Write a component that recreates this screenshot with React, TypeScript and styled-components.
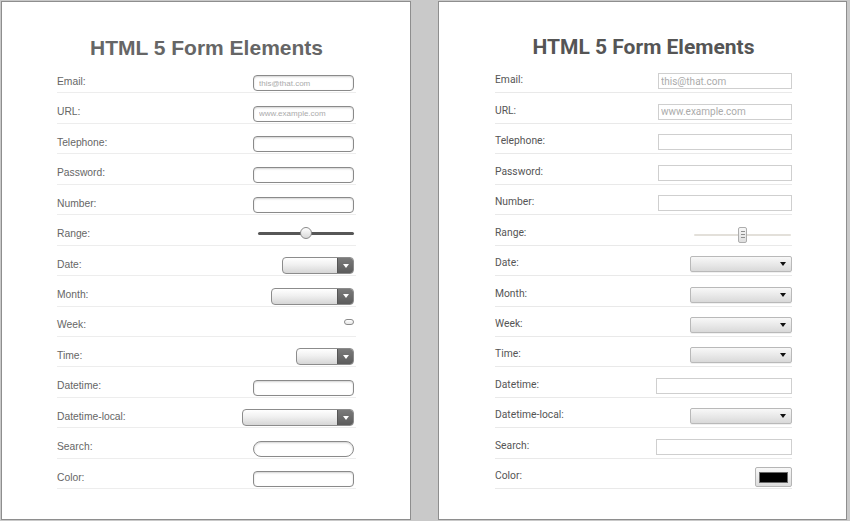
import React from 'react';
import styled, { createGlobalStyle, css } from 'styled-components';

type Skin = 'ios' | 'android';

type Kind = 'text' | 'range' | 'select' | 'week' | 'search' | 'color';

interface FieldDef {
  label: string;
  kind: Kind;
  width?: number;
  placeholder?: string;
}

const iosFields: FieldDef[] = [
  { label: 'Email:', kind: 'text', width: 101, placeholder: 'this@that.com' },
  { label: 'URL:', kind: 'text', width: 101, placeholder: 'www.example.com' },
  { label: 'Telephone:', kind: 'text', width: 101 },
  { label: 'Password:', kind: 'text', width: 101 },
  { label: 'Number:', kind: 'text', width: 101 },
  { label: 'Range:', kind: 'range' },
  { label: 'Date:', kind: 'select', width: 72 },
  { label: 'Month:', kind: 'select', width: 83 },
  { label: 'Week:', kind: 'week' },
  { label: 'Time:', kind: 'select', width: 58 },
  { label: 'Datetime:', kind: 'text', width: 101 },
  { label: 'Datetime-local:', kind: 'select', width: 112 },
  { label: 'Search:', kind: 'search', width: 101 },
  { label: 'Color:', kind: 'text', width: 101 },
];

const androidFields: FieldDef[] = [
  { label: 'Email:', kind: 'text', width: 134, placeholder: 'this@that.com' },
  { label: 'URL:', kind: 'text', width: 134, placeholder: 'www.example.com' },
  { label: 'Telephone:', kind: 'text', width: 134 },
  { label: 'Password:', kind: 'text', width: 134 },
  { label: 'Number:', kind: 'text', width: 134 },
  { label: 'Range:', kind: 'range' },
  { label: 'Date:', kind: 'select', width: 102 },
  { label: 'Month:', kind: 'select', width: 102 },
  { label: 'Week:', kind: 'select', width: 102 },
  { label: 'Time:', kind: 'select', width: 102 },
  { label: 'Datetime:', kind: 'text', width: 136 },
  { label: 'Datetime-local:', kind: 'select', width: 102 },
  { label: 'Search:', kind: 'text', width: 136 },
  { label: 'Color:', kind: 'color' },
];

const GlobalStyle = createGlobalStyle`
  html, body {
    margin: 0;
    padding: 0;
    background: #c9c9c9;
  }
  body {
    width: 850px;
    height: 521px;
    overflow: hidden;
  }
`;

const Stage = styled.div`
  display: flex;
  gap: 27px;
  padding: 1px 3px 0 1px;
  height: 521px;
  box-sizing: border-box;
`;

const Panel = styled.section<{ $skin: Skin }>`
  width: ${p => (p.$skin === 'ios' ? 410 : 409)}px;
  height: 519px;
  box-sizing: border-box;
  background: #fff;
  border: 1px solid #8e8e8e;
  padding: 34px 54px 0 ${p => (p.$skin === 'ios' ? 55 : 56)}px;
  font-family: ${p =>
    p.$skin === 'ios'
      ? '"Liberation Sans", Arial, sans-serif'
      : 'Roboto, "Noto Sans", sans-serif'};
`;

const Title = styled.h1<{ $skin: Skin }>`
  margin: ${p => (p.$skin === 'ios' ? '0 0 3px' : '-1px 0 4px')};
  font-size: 21px;
  line-height: 24px;
  font-weight: bold;
  text-align: center;
  color: ${p => (p.$skin === 'ios' ? '#666' : '#555')};
`;

const Row = styled.div<{ $skin: Skin }>`
  display: flex;
  justify-content: space-between;
  align-items: flex-end;
  height: 30.45px;
  box-sizing: border-box;
  border-bottom: 1px solid ${p => (p.$skin === 'ios' ? '#ededed' : '#e9e9e9')};
  padding-bottom: ${p => (p.$skin === 'ios' ? 1 : 3)}px;
`;

const Label = styled.label<{ $skin: Skin }>`
  font-size: 10.3px;
  line-height: 12px;
  color: ${p => (p.$skin === 'ios' ? '#666' : '#555')};
  margin-bottom: ${p => (p.$skin === 'ios' ? 3.5 : 3)}px;
`;

const TextBox = styled.input<{ $skin: Skin; $w: number; $pill?: boolean }>`
  appearance: none;
  box-sizing: border-box;
  width: ${p => p.$w}px;
  height: 16px;
  margin: 0;
  background: #fff;
  outline: none;
  ${p =>
    p.$skin === 'ios'
      ? css`
          margin-right: 2px;
          padding: 0 5px;
          border: 1px solid #8a8a8a;
          border-radius: ${p.$pill ? 8 : 4}px;
          box-shadow: inset 0 1px 2px rgba(0, 0, 0, 0.18);
          font: 8px 'Liberation Sans', Arial, sans-serif;
        `
      : css`
          padding: 0 2px;
          border: 1px solid #cfcfcf;
          border-radius: 0;
          font: 10px Roboto, 'Noto Sans', sans-serif;
        `}
  &::placeholder {
    color: #ababab;
  }
`;

const IosSelect = styled.div<{ $w: number }>`
  display: flex;
  justify-content: flex-end;
  box-sizing: border-box;
  width: ${p => p.$w}px;
  height: 17px;
  margin-right: 2px;
  border: 1px solid #8c8c8c;
  border-radius: 4px;
  overflow: hidden;
  background: linear-gradient(#ffffff, #f0f0f0 45%, #d6d6d6);
`;

const IosArrow = styled.div`
  display: flex;
  align-items: center;
  justify-content: center;
  width: 15px;
  border-left: 1px solid #555;
  background: linear-gradient(#7a7a7a, #5c5c5c);
`;

const Caret = styled.span<{ $color: string; $size: number }>`
  width: 0;
  height: 0;
  border-left: ${p => p.$size}px solid transparent;
  border-right: ${p => p.$size}px solid transparent;
  border-top: ${p => p.$size + 1}px solid ${p => p.$color};
`;

const DroidSelect = styled.div<{ $w: number }>`
  display: flex;
  align-items: center;
  justify-content: flex-end;
  box-sizing: border-box;
  width: ${p => p.$w}px;
  height: 16px;
  padding-right: 5px;
  border: 1px solid #b9b9b9;
  border-radius: 2px;
  background: linear-gradient(#f8f8f8, #e6e6e6 60%, #d9d9d9);
  box-shadow: 0 1px 0 rgba(0, 0, 0, 0.06);
`;

const RangeTrack = styled.div<{ $skin: Skin }>`
  position: relative;
  display: flex;
  align-items: center;
  ${p =>
    p.$skin === 'ios'
      ? css`
          width: 96px;
          height: 12px;
          margin: 0 2px 4.5px 0;
        `
      : css`
          width: 97px;
          height: 16px;
          margin: 0 1px -1px 0;
        `}
  &::before {
    content: '';
    flex: 1;
    height: ${p => (p.$skin === 'ios' ? 3 : 2)}px;
    border-radius: 2px;
    background: ${p => (p.$skin === 'ios' ? '#575757' : '#e3e0da')};
  }
`;

const IosThumb = styled.div<{ $at: number }>`
  position: absolute;
  top: 0;
  left: ${p => p.$at}px;
  box-sizing: border-box;
  width: 12px;
  height: 12px;
  border: 1px solid #8a8a8a;
  border-radius: 50%;
  background: linear-gradient(#ffffff, #d8d8d8);
`;

const DroidThumb = styled.div<{ $at: number }>`
  position: absolute;
  top: 0;
  left: ${p => p.$at}px;
  display: flex;
  flex-direction: column;
  align-items: center;
  justify-content: center;
  gap: 2px;
  box-sizing: border-box;
  width: 9px;
  height: 16px;
  border: 1px solid #adadad;
  border-radius: 2px;
  background: linear-gradient(#f7f7f7, #dedede);
`;

const Grip = styled.span`
  width: 4px;
  height: 1px;
  background: #8f8f8f;
`;

const WeekPill = styled.div`
  box-sizing: border-box;
  width: 10px;
  height: 6px;
  margin: 0 2px 10px 0;
  border: 1px solid #8a8a8a;
  border-radius: 3px;
  background: linear-gradient(#fff, #e6e6e6);
`;

const ColorWell = styled.div`
  display: flex;
  align-items: center;
  justify-content: center;
  box-sizing: border-box;
  width: 37px;
  height: 20px;
  margin-bottom: -2px;
  border: 1px solid #b5b5b5;
  border-radius: 2px;
  background: linear-gradient(#f7f7f7, #dcdcdc);
`;

const Swatch = styled.span`
  width: 29px;
  height: 11px;
  box-sizing: border-box;
  border: 1px solid #6a6a6a;
  background: #000;
`;

function Control({ skin, field }: { skin: Skin; field: FieldDef }) {
  const w = field.width ?? 100;
  switch (field.kind) {
    case 'text':
    case 'search':
      return (
        <TextBox
          $skin={skin}
          $w={w}
          $pill={field.kind === 'search'}
          type={field.label === 'Password:' ? 'password' : 'text'}
          placeholder={field.placeholder}
          readOnly
        />
      );
    case 'range':
      return (
        <RangeTrack $skin={skin}>
          {skin === 'ios' ? (
            <IosThumb $at={42} />
          ) : (
            <DroidThumb $at={44}>
              <Grip />
              <Grip />
              <Grip />
            </DroidThumb>
          )}
        </RangeTrack>
      );
    case 'select':
      return skin === 'ios' ? (
        <IosSelect $w={w}>
          <IosArrow>
            <Caret $color="#fff" $size={3} />
          </IosArrow>
        </IosSelect>
      ) : (
        <DroidSelect $w={w}>
          <Caret $color="#111" $size={3} />
        </DroidSelect>
      );
    case 'week':
      return <WeekPill />;
    case 'color':
      return (
        <ColorWell>
          <Swatch />
        </ColorWell>
      );
  }
  return null;
}

function FormPanel({ skin, fields }: { skin: Skin; fields: FieldDef[] }) {
  return (
    <Panel $skin={skin}>
      <Title $skin={skin}>HTML 5 Form Elements</Title>
      {fields.map(f => (
        <Row key={f.label} $skin={skin}>
          <Label $skin={skin}>{f.label}</Label>
          <Control skin={skin} field={f} />
        </Row>
      ))}
    </Panel>
  );
}

export default function App() {
  return (
    <>
      <GlobalStyle />
      <Stage>
        <FormPanel skin="ios" fields={iosFields} />
        <FormPanel skin="android" fields={androidFields} />
      </Stage>
    </>
  );
}
